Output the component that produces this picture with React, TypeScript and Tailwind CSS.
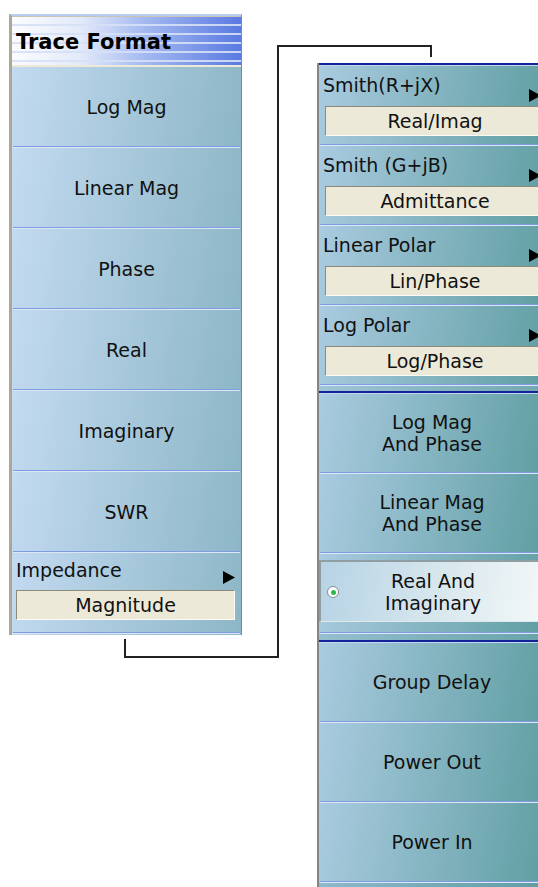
import React from "react"

const leftItems = ["Log Mag", "Linear Mag", "Phase", "Real", "Imaginary", "SWR"]

const subItems = [
  { label: "Smith(R+jX)", value: "Real/Imag" },
  { label: "Smith (G+jB)", value: "Admittance" },
  { label: "Linear Polar", value: "Lin/Phase" },
  { label: "Log Polar", value: "Log/Phase" },
]

function Sep() {
  return <div className="h-[2px] mx-[1px] border-t border-[#7f9be2] bg-[#dbe7f7]" />
}

function NavyRule() {
  return <div className="h-[3px] border-t-2 border-[#12229a] bg-[#c4d6f0]" />
}

function Arrow() {
  return (
    <svg width="12" height="13" viewBox="0 0 12 13" className="shrink-0">
      <polygon points="0,0 12,6.5 0,13" fill="#000" />
    </svg>
  )
}

function ValueBox({ children }: { children: React.ReactNode }) {
  return (
    <div className="h-[30px] flex items-center justify-center bg-[#ece9d8] border border-t-[#8d8a7c] border-l-[#8d8a7c] border-b-[#fbfaf4] border-r-[#fbfaf4] text-[19px] leading-[22px]">
      {children}
    </div>
  )
}

function LeftPanel() {
  const btn = "bg-[linear-gradient(100deg,#c3daf1,#8cb6c6)]"
  return (
    <div className="shrink-0 ml-[9px] mt-[14px] w-[233px] flex flex-col border-t-2 border-[#b9cdee] border-l-[3px] border-l-[#aca899] border-r border-r-[#6f88c0]">
      <div className="h-[49px] border-t border-[#c9c5b4] flex items-center pl-[4px] bg-[repeating-linear-gradient(180deg,transparent_0px,transparent_7px,rgba(214,224,246,0.9)_7px,rgba(214,224,246,0.9)_9px),linear-gradient(90deg,#fbfcff,#e2e9f9_30%,#a4b9f1_58%,#5a7ae2)]">
        <span className="text-[21px] font-bold leading-none text-black pt-[2px]">Trace Format</span>
      </div>
      <div className="h-[2px] bg-[#ece9d8]" />
      {leftItems.map((item) => (
        <div key={item} className={btn}>
          <div className="h-[79px] flex items-center justify-center text-[19px] leading-[22px] rounded-tr-[4px]">
            {item}
          </div>
          <Sep />
        </div>
      ))}
      <div className={btn}>
        <div className="h-[79px] flex flex-col px-[4px] pt-[6px]">
          <div className="flex items-end justify-between h-[22px]">
            <span className="text-[19px] leading-[22px]">Impedance</span>
            <span className="mb-[-3px] mr-[2px]">
              <Arrow />
            </span>
          </div>
          <div className="mt-[9px] mr-[2px]">
            <ValueBox>Magnitude</ValueBox>
          </div>
        </div>
        <Sep />
        <div className="h-[1px]" />
      </div>
    </div>
  )
}

function RightPanel() {
  const btn = "bg-[linear-gradient(100deg,#aacbe0,#5f9ea2)]"
  return (
    <div className="shrink-0 ml-[75px] mt-[63px] w-[228px] flex flex-col border-l-2 border-[#858585] bg-[linear-gradient(100deg,#aacbe0,#5f9ea2)]">
      <NavyRule />
      {subItems.map((s) => (
        <div key={s.label} className={btn}>
          <div className="h-[78px] flex flex-col pl-[4px] pr-[6px] pt-[8px]">
            <div className="flex items-end justify-between h-[22px]">
              <span className="text-[19px] leading-[22px]">{s.label}</span>
              <span className="mb-[-6px] mr-[-2px]">
                <Arrow />
              </span>
            </div>
            <div className="mt-[10px] ml-[2px] mr-[-6px]">
              <ValueBox>{s.value}</ValueBox>
            </div>
          </div>
          <Sep />
        </div>
      ))}
      <div className="h-[5px]" />
      <NavyRule />
      {["Log Mag|And Phase", "Linear Mag|And Phase"].map((t) => (
        <div key={t} className={btn}>
          <div className="h-[78px] flex flex-col items-center justify-center text-[19px] leading-[22px]">
            {t.split("|").map((l) => (
              <span key={l}>{l}</span>
            ))}
          </div>
          <Sep />
        </div>
      ))}
      <div className={btn}>
        <div className="h-[78px] pt-[6px]">
          <div className="h-[62px] relative flex flex-col items-center justify-center text-[19px] leading-[22px] border-t-2 border-l-2 border-[#8e9ea2] border-b border-b-[#dfe8ea] bg-[linear-gradient(100deg,#b6d3e5,#d6e6ed_50%,#f4f8f8)]">
            <span className="absolute left-[6px] top-[24px] w-[12px] h-[12px] rounded-full bg-white border border-[#7f8e96] flex items-center justify-center">
              <span className="w-[5px] h-[5px] rounded-full bg-[#2fb84a]" />
            </span>
            <span>Real And</span>
            <span>Imaginary</span>
          </div>
        </div>
        <Sep />
      </div>
      <div className="h-[6px]" />
      <NavyRule />
      {["Group Delay", "Power Out", "Power In"].map((t) => (
        <div key={t} className={btn}>
          <div className="h-[78px] flex items-center justify-center text-[19px] leading-[22px]">{t}</div>
          <Sep />
        </div>
      ))}
      <div className="h-[10px]" />
    </div>
  )
}

export default function App() {
  return (
    <div className="relative w-[538px] h-[887px] overflow-hidden bg-white text-[#111] font-['DejaVu_Sans',sans-serif]">
      <div className="flex items-start">
        <LeftPanel />
        <RightPanel />
      </div>
      <svg className="absolute inset-0 pointer-events-none" width="538" height="887">
        <polyline
          points="125,639 125,657 278,657 278,46 431,46 431,57"
          fill="none"
          stroke="#222"
          strokeWidth="2"
        />
      </svg>
    </div>
  )
}
